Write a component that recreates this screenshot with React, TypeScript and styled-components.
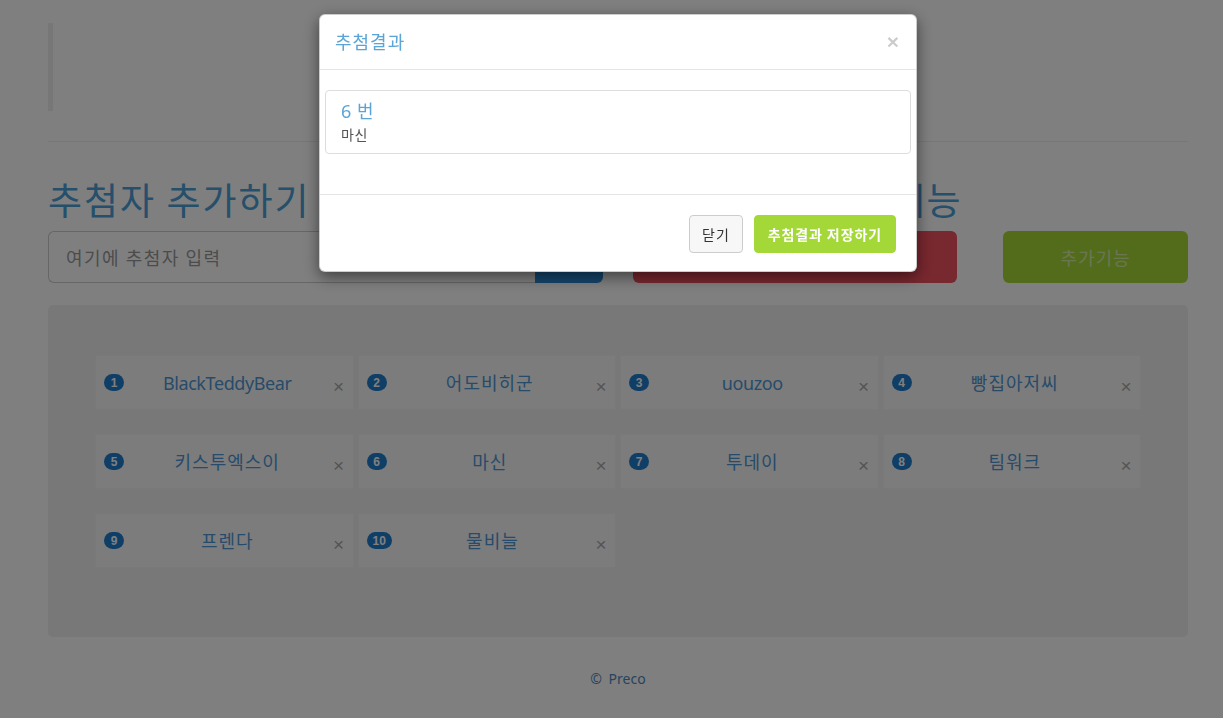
import React from "react";
import styled, { createGlobalStyle } from "styled-components";

const GlobalStyle = createGlobalStyle`
  html, body {
    margin: 0;
    padding: 0;
    background: #ffffff;
    overflow: hidden;
  }
  body {
    font-family: "Noto Sans", "Noto Sans CJK KR", sans-serif;
    font-size: 14px;
    line-height: 1.42857;
    color: #333;
  }
  * { box-sizing: border-box; }
`;

const Page = styled.div`
  width: 1236px;
  min-height: 718px;
`;

const Container = styled.div`
  width: 1140px;
  margin: 0 auto;
  padding-top: 23px;
`;

const Quote = styled.blockquote`
  margin: 0;
  height: 88px;
  border-left: 5px solid #eeeeee;
`;

const Rule = styled.hr`
  margin: 30px 0 0;
  border: 0;
  border-top: 1px solid #eeeeee;
`;

const TopRow = styled.div`
  display: grid;
  grid-template-columns: 555px 555px;
  column-gap: 30px;
  margin-top: 37px;
`;

const Column = styled.div`
  display: flex;
  flex-direction: column;
`;

const Heading = styled.h2<{ $spacing?: number }>`
  margin: 0 0 12px;
  font-family: "Noto Sans CJK KR", sans-serif;
  font-size: 37px;
  font-weight: 400;
  line-height: 40px;
  letter-spacing: ${(p) => p.$spacing ?? 2}px;
  color: #4d9fd6;
  white-space: nowrap;
`;

const InputGroup = styled.div`
  display: flex;
  height: 52px;
`;

const TextInput = styled.input`
  flex: 1;
  height: 52px;
  padding: 0 17px;
  border: 1px solid #cccccc;
  border-right: 0;
  border-radius: 6px 0 0 6px;
  font-family: "Noto Sans CJK KR", sans-serif;
  font-size: 18px;
  letter-spacing: 1.5px;
  color: #555;
  background: #fff;
  outline: none;
  &::placeholder { color: #999999; }
`;

const AddButton = styled.button`
  width: 68px;
  height: 52px;
  border: 0;
  border-radius: 0 6px 6px 0;
  background: #2a8ad8;
  color: #fff;
  font-family: "Noto Sans CJK KR", sans-serif;
  font-size: 18px;
`;

const ActionRow = styled.div`
  display: flex;
  justify-content: space-between;
  height: 52px;
`;

const ActionButton = styled.button<{ $tone: "red" | "green"; $w: number }>`
  width: ${(p) => p.$w}px;
  height: 52px;
  border: 0;
  border-radius: 6px;
  background: ${(p) => (p.$tone === "red" ? "#f1505e" : "#a4d838")};
  color: ${(p) => (p.$tone === "red" ? "#fff" : "rgba(255,255,255,0.55)")};
  font-family: "Noto Sans CJK KR", sans-serif;
  font-size: 18px;
  letter-spacing: 1px;
`;

const Well = styled.div`
  margin-top: 22px;
  height: 332px;
  padding: 50px 47px 0;
  background: #f0f0f0;
  border-radius: 5px;
`;

const CardGrid = styled.div`
  display: grid;
  grid-template-columns: repeat(4, 1fr);
  column-gap: 4px;
  row-gap: 24px;
`;

const Card = styled.div`
  display: flex;
  align-items: center;
  height: 55px;
  padding: 0 8px;
  background: #f9f9f9;
  border: 1px solid #f3f3f3;
`;

const Badge = styled.span`
  display: inline-flex;
  align-items: center;
  justify-content: center;
  min-width: 20px;
  height: 17px;
  padding: 0 6px;
  border-radius: 9px;
  background: #1f7ccc;
  color: #fff;
  font-family: "Liberation Sans", sans-serif;
  font-size: 12px;
  font-weight: 700;
  line-height: 1;
`;

const Name = styled.span<{ $latin: boolean }>`
  flex: 1;
  text-align: center;
  margin-top: 3px;
  font-family: "Noto Sans", "Noto Sans CJK KR", sans-serif;
  font-size: 18px;
  letter-spacing: ${(p) => (p.$latin ? "-0.4px" : "1px")};
  color: #4f97d4;
`;

const Remove = styled.span`
  width: 16px;
  margin-top: 8px;
  margin-right: -2px;
  text-align: center;
  font-family: "Liberation Sans", sans-serif;
  font-size: 19px;
  line-height: 1;
  color: #a9a9a9;
`;

const Footer = styled.footer`
  margin-top: 32px;
  text-align: center;
  font-family: "Noto Sans", sans-serif;
  font-size: 14px;
  line-height: 20px;
  color: #4f88bb;
  word-spacing: 3px;
`;

const Backdrop = styled.div`
  position: fixed;
  top: 0;
  left: 0;
  width: 1236px;
  height: 100%;
  background: rgba(0, 0, 0, 0.5);
  display: flex;
  justify-content: center;
  align-items: flex-start;
  padding-top: 14px;
`;

const Dialog = styled.div`
  width: 598px;
  background: #fff;
  border: 1px solid rgba(0, 0, 0, 0.2);
  border-radius: 6px;
  box-shadow: 0 5px 15px rgba(0, 0, 0, 0.5);
  overflow: hidden;
`;

const DialogHeader = styled.div`
  display: flex;
  align-items: center;
  justify-content: space-between;
  padding: 15px;
  height: 55px;
  border-bottom: 1px solid #e5e5e5;
`;

const DialogTitle = styled.h4`
  margin: 0;
  margin-top: -1px;
  font-family: "Noto Sans CJK KR", sans-serif;
  font-size: 18px;
  font-weight: 400;
  line-height: 25px;
  letter-spacing: 1px;
  color: #5aa5d6;
`;

const CloseX = styled.span`
  margin-right: 2px;
  margin-top: -1px;
  font-family: "Liberation Sans", sans-serif;
  font-size: 21px;
  font-weight: 700;
  line-height: 1;
  color: #000;
  opacity: 0.2;
`;

const DialogBody = styled.div`
  padding: 20px 5px;
`;

const ResultBox = styled.div`
  margin-bottom: 20px;
  border: 1px solid #dddddd;
  border-radius: 4px;
  padding: 10px 15px 9px;
`;

const ResultNumber = styled.div`
  font-family: "Noto Sans", "Noto Sans CJK KR", sans-serif;
  font-size: 18px;
  line-height: 20px;
  letter-spacing: 0.5px;
  color: #5aa5d6;
`;

const ResultName = styled.div`
  margin-top: 3px;
  font-family: "Noto Sans CJK KR", sans-serif;
  font-size: 14px;
  line-height: 20px;
  letter-spacing: 0.5px;
  color: #555555;
`;

const DialogFooter = styled.div`
  display: flex;
  justify-content: flex-end;
  gap: 11px;
  padding: 20px 20px 18px;
  border-top: 1px solid #e5e5e5;
`;

const FooterButton = styled.button<{ $primary?: boolean }>`
  height: 38px;
  padding: 0 ${(p) => (p.$primary ? 13 : 12)}px;
  border-radius: 4px;
  border: 1px solid ${(p) => (p.$primary ? "#a4d838" : "#cccccc")};
  background: ${(p) => (p.$primary ? "#a4d838" : "#f7f7f7")};
  color: ${(p) => (p.$primary ? "#fff" : "#333")};
  font-family: "Noto Sans CJK KR", sans-serif;
  font-size: 14px;
  font-weight: ${(p) => (p.$primary ? 700 : 400)};
  letter-spacing: 0.9px;
`;

const names = [
  "BlackTeddyBear",
  "어도비히군",
  "uouzoo",
  "빵집아저씨",
  "키스투엑스이",
  "마신",
  "투데이",
  "팀워크",
  "프렌다",
  "물비늘",
];

export default function App() {
  return (
    <>
      <GlobalStyle />
      <Page>
        <Container>
          <Quote />
          <Rule />
          <TopRow>
            <Column>
              <Heading>추첨자 추가하기</Heading>
              <InputGroup>
                <TextInput placeholder="여기에 추첨자 입력" />
                <AddButton>추가</AddButton>
              </InputGroup>
            </Column>
            <Column>
              <Heading $spacing={0.45}>추첨하기 및 추가기능</Heading>
              <ActionRow>
                <ActionButton $tone="red" $w={324}>추첨하기</ActionButton>
                <ActionButton $tone="green" $w={185}>추가기능</ActionButton>
              </ActionRow>
            </Column>
          </TopRow>
          <Well>
            <CardGrid>
              {names.map((n, i) => (
                <Card key={n}>
                  <Badge>{i + 1}</Badge>
                  <Name $latin={/^[A-Za-z]+$/.test(n)}>{n}</Name>
                  <Remove>×</Remove>
                </Card>
              ))}
            </CardGrid>
          </Well>
          <Footer>© Preco</Footer>
        </Container>
        <Backdrop>
          <Dialog>
            <DialogHeader>
              <DialogTitle>추첨결과</DialogTitle>
              <CloseX>×</CloseX>
            </DialogHeader>
            <DialogBody>
              <ResultBox>
                <ResultNumber>6 번</ResultNumber>
                <ResultName>마신</ResultName>
              </ResultBox>
            </DialogBody>
            <DialogFooter>
              <FooterButton>닫기</FooterButton>
              <FooterButton $primary>추첨결과 저장하기</FooterButton>
            </DialogFooter>
          </Dialog>
        </Backdrop>
      </Page>
    </>
  );
}
